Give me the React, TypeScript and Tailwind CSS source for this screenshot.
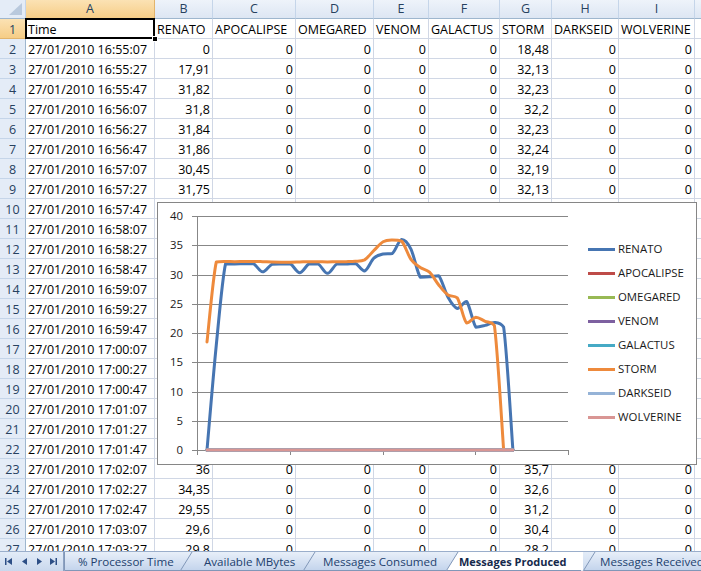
import React from 'react';

const COLS = ['A', 'B', 'C', 'D', 'E', 'F', 'G', 'H', 'I', ''];
const NAMES = ['RENATO', 'APOCALIPSE', 'OMEGARED', 'VENOM', 'GALACTUS', 'STORM', 'DARKSEID', 'WOLVERINE'];

// sampled every 20s, first row = 16:55:07
const renato = [
  0, 17.91, 31.82, 31.8, 31.84, 31.86, 30.45, 31.75, 31.8, 31.8, 30.3, 31.8, 31.8, 30.2, 31.8, 31.8, 31.9,
  30.6, 32.8, 33.5, 33.6, 36, 34.35, 29.55, 29.6, 29.8, 26.1, 24.2, 25.4, 21, 21.3, 21.8, 21, 0,
];
const storm = [
  18.48, 32.13, 32.23, 32.2, 32.23, 32.24, 32.19, 32.13, 32.1, 32.1, 32.15, 32.2, 32.2, 32.15, 32.2, 32.2,
  32.25, 32.5, 34.1, 35.6, 35.9, 35.7, 32.6, 31.2, 30.4, 28.2, 26.5, 26, 21.7, 22.7, 22, 21.3, 0,
];
const zeros = renato.map(() => 0);

const SERIES = [
  { name: 'RENATO', color: '#4675b2', bg: 'bg-[#4675b2]', data: renato },
  { name: 'APOCALIPSE', color: '#be4b48', bg: 'bg-[#be4b48]', data: zeros },
  { name: 'OMEGARED', color: '#98b954', bg: 'bg-[#98b954]', data: zeros },
  { name: 'VENOM', color: '#7d60a0', bg: 'bg-[#7d60a0]', data: zeros },
  { name: 'GALACTUS', color: '#46aac5', bg: 'bg-[#46aac5]', data: zeros },
  { name: 'STORM', color: '#ee8a3c', bg: 'bg-[#ee8a3c]', data: storm },
  { name: 'DARKSEID', color: '#95b3d7', bg: 'bg-[#95b3d7]', data: zeros },
  { name: 'WOLVERINE', color: '#d99694', bg: 'bg-[#d99694]', data: zeros },
];

const X0 = 49;
const STEP = 9.27;
const Y0 = 247;
const SC = 5.85;

function timeFor(k: number) {
  const t = 16 * 3600 + 55 * 60 + 7 + k * 20;
  const p = (n: number) => String(n).padStart(2, '0');
  return `27/01/2010 ${p(Math.floor(t / 3600))}:${p(Math.floor((t % 3600) / 60))}:${p(t % 60)}`;
}

const fmt = (v: number) => String(v).replace('.', ',');

const clamp = (v: number, a: number, b: number) => Math.min(Math.max(v, Math.min(a, b)), Math.max(a, b));

// catmull-rom, control points kept between the two ends so flats don't bulge
function smoothPath(vals: number[]) {
  const pts = vals.map((v, i) => [X0 + i * STEP, Y0 - v * SC]);
  let d = `M${pts[0][0]},${pts[0][1]}`;
  for (let i = 0; i < pts.length - 1; i++) {
    const p0 = pts[i - 1] || pts[i];
    const p1 = pts[i];
    const p2 = pts[i + 1];
    const p3 = pts[i + 2] || p2;
    const c1x = p1[0] + (p2[0] - p0[0]) / 6;
    const c1y = clamp(p1[1] + (p2[1] - p0[1]) / 6, p1[1], p2[1]);
    const c2x = p2[0] - (p3[0] - p1[0]) / 6;
    const c2y = clamp(p2[1] - (p3[1] - p1[1]) / 6, p1[1], p2[1]);
    d += ` C${c1x.toFixed(2)},${c1y.toFixed(2)} ${c2x.toFixed(2)},${c2y.toFixed(2)} ${p2[0].toFixed(2)},${p2[1].toFixed(2)}`;
  }
  return d;
}

const cell = 'h-[20px] border-r border-b border-[#d0d7e5] overflow-hidden whitespace-nowrap text-[12.5px] leading-[16px] pt-[3px] px-[2px] text-black';

function Chart() {
  const ticks = [0, 1, 2, 3, 4].map((j) => 39 + 92.75 * j);
  return (
    <div className="absolute left-[157px] top-[202px] w-[540px] h-[263px] border border-[#868686] bg-white flex">
      <svg width="430" height="261" className="shrink-0">
        {[5, 10, 15, 20, 25, 30, 35, 40].map((v) => {
          const y = Math.round(Y0 - v * SC) + 0.5;
          return <line key={v} x1="34" x2="410" y1={y} y2={y} stroke="#878787" strokeWidth="1" />;
        })}
        <line x1="39.5" x2="39.5" y1="13" y2="247" stroke="#878787" />
        <line x1="34" x2="410" y1="247.5" y2="247.5" stroke="#878787" />
        {ticks.map((x) => (
          <line key={x} x1={Math.round(x) + 0.5} x2={Math.round(x) + 0.5} y1="247" y2="252" stroke="#878787" />
        ))}
        {[0, 5, 10, 15, 20, 25, 30, 35, 40].map((v) => (
          <text key={v} x="25" y={Y0 - v * SC} dy="0.36em" textAnchor="end" fontSize="11.4" fill="#1a1a1a">
            {v}
          </text>
        ))}
        {SERIES.map((s) => (
          <path key={s.name} d={smoothPath(s.data)} fill="none" stroke={s.color} strokeWidth="3" strokeLinejoin="round" strokeLinecap="round" />
        ))}
      </svg>
      <div className="flex flex-col pt-[34px]">
        {SERIES.map((s) => (
          <div key={s.name} className="h-[24px] flex items-center">
            <span className={`w-[27px] h-[3px] ${s.bg}`} />
            <span className="ml-[3px] text-[11.4px] text-[#1a1a1a]">{s.name}</span>
          </div>
        ))}
      </div>
    </div>
  );
}

const TABS = [
  { label: '% Processor Time', w: 126, box: 'w-[126px]', pad: 'pl-[14px]', slant: false },
  { label: 'Available MBytes', w: 137, box: 'w-[137px] -ml-[10px]', pad: 'pl-[24px]', slant: true },
  { label: 'Messages Consumed', w: 150, box: 'w-[150px] -ml-[14px]', pad: 'pl-[20px]', slant: true },
  { label: 'Messages Produced', w: 137, box: 'w-[137px] -ml-[7px] z-10', pad: 'pl-[13px]', slant: true, active: true },
  { label: 'Messages Received', w: 130, box: 'w-[130px]', pad: 'pl-[17px]', slant: true },
];

function SheetTabs() {
  return (
    <div className="h-[20px] flex bg-linear-to-b from-[#e3ecf8] to-[#c9d8ed] border-t border-[#9aaecb] overflow-hidden">
      <svg width="64" height="19" className="shrink-0">
        <g fill="#2d4f86">
          <rect x="5" y="6" width="1.5" height="7" />
          <path d="M12,6 L7,9.5 L12,13 Z" />
          <path d="M27,6 L22,9.5 L27,13 Z" />
          <path d="M37,6 L42,9.5 L37,13 Z" />
          <path d="M50,6 L55,9.5 L50,13 Z" />
          <rect x="55.5" y="6" width="1.5" height="7" />
        </g>
        <line x1="63.5" x2="63.5" y1="0" y2="19" stroke="#8da2c2" />
      </svg>
      {TABS.map((t, i) => (
        <div key={t.label} className={`relative h-full shrink-0 ${t.box}`}>
          <svg width={t.w} height="19" className="absolute inset-0">
            <defs>
              <linearGradient id={`tabg${i}`} x1="0" y1="0" x2="0" y2="1">
                <stop offset="0" stopColor="#e8eff9" />
                <stop offset="1" stopColor="#c3d4ec" />
              </linearGradient>
            </defs>
            <path
              d={t.slant ? `M0.5,18.5 L12,0 L${t.w},0 L${t.w},18.5 Z` : `M0.5,0 L${t.w},0 L${t.w},18.5 L0.5,18.5 Z`}
              fill={t.active ? '#ffffff' : `url(#tabg${i})`}
            />
            <path
              d={t.slant ? `M12,0 L0.5,18.5 L${t.w - 2},18.5` : `M0.5,0 L0.5,18.5 L${t.w - 2},18.5`}
              fill="none"
              stroke="#8197b8"
            />
          </svg>
          <span
            className={`relative block leading-[19px] whitespace-nowrap ${t.pad} ${
              t.active ? 'font-bold text-[11px] text-[#15294b]' : 'text-[11.6px] text-[#223f6e]'
            }`}
          >
            {t.label}
          </span>
        </div>
      ))}
    </div>
  );
}

export default function App() {
  const rows = Array.from({ length: 27 }, (_, i) => i + 1);
  return (
    <div className="w-[701px] h-[571px] flex flex-col overflow-hidden bg-white font-['Open_Sans','Noto_Sans',Arial,sans-serif]">
      <div className="relative flex-1 overflow-hidden">
        <div className="grid grid-cols-[26px_129px_58px_83px_78px_55px_71px_52px_67px_76px_70px] w-max">
          {/* header row */}
          <div className="h-[19px] bg-[#e4ecf7] border-r border-b border-r-[#c5d5e9] border-b-[#9eb6ce] relative">
            <svg width="25" height="18" className="absolute inset-0">
              <path d="M22,3 L22,15 L9,15 Z" fill="#b9c9dd" />
            </svg>
          </div>
          {COLS.map((c, i) => (
            <div
              key={i}
              className={`h-[19px] border-r border-b text-center text-[12.5px] leading-[18px] text-[#27415f] ${
                c === 'A'
                  ? 'bg-linear-to-b from-[#fbe2b4] to-[#f6cd86] border-r-[#e2b46c] border-b-[#f0a94a]'
                  : 'bg-linear-to-b from-[#eef3fa] to-[#dde6f3] border-r-[#c5d5e9] border-b-[#9eb6ce]'
              }`}
            >
              {c}
            </div>
          ))}
          {rows.map((r) => {
            const k = r - 2;
            return (
              <React.Fragment key={r}>
                <div
                  className={`h-[20px] border-r border-b text-center text-[12.5px] leading-[16px] pt-[3px] text-[#27415f] ${
                    r === 1
                      ? 'bg-linear-to-b from-[#fbe2b4] to-[#f6cd86] border-r-[#f0a94a] border-b-[#e2b46c]'
                      : 'bg-[#e4ecf7] border-r-[#9eb6ce] border-b-[#c5d5e9]'
                  }`}
                >
                  {r}
                </div>
                {r === 1 ? (
                  <>
                    <div className={`${cell} relative overflow-visible`}>
                      Time
                      <div className="absolute -top-px -left-px -right-px bottom-[-1px] border-2 border-black z-10" />
                      <div className="absolute right-[-4px] bottom-[-4px] w-[6px] h-[6px] bg-black border border-white z-20" />
                    </div>
                    {NAMES.map((n) => (
                      <div key={n} className={cell}>
                        {n}
                      </div>
                    ))}
                  </>
                ) : (
                  <>
                    <div className={cell}>{timeFor(k)}</div>
                    <div className={`${cell} text-right`}>{fmt(renato[k])}</div>
                    <div className={`${cell} text-right`}>0</div>
                    <div className={`${cell} text-right`}>0</div>
                    <div className={`${cell} text-right`}>0</div>
                    <div className={`${cell} text-right`}>0</div>
                    <div className={`${cell} text-right`}>{fmt(storm[k])}</div>
                    <div className={`${cell} text-right`}>0</div>
                    <div className={`${cell} text-right`}>0</div>
                  </>
                )}
                <div className={cell} />
              </React.Fragment>
            );
          })}
        </div>
        <Chart />
      </div>
      <SheetTabs />
    </div>
  );
}
